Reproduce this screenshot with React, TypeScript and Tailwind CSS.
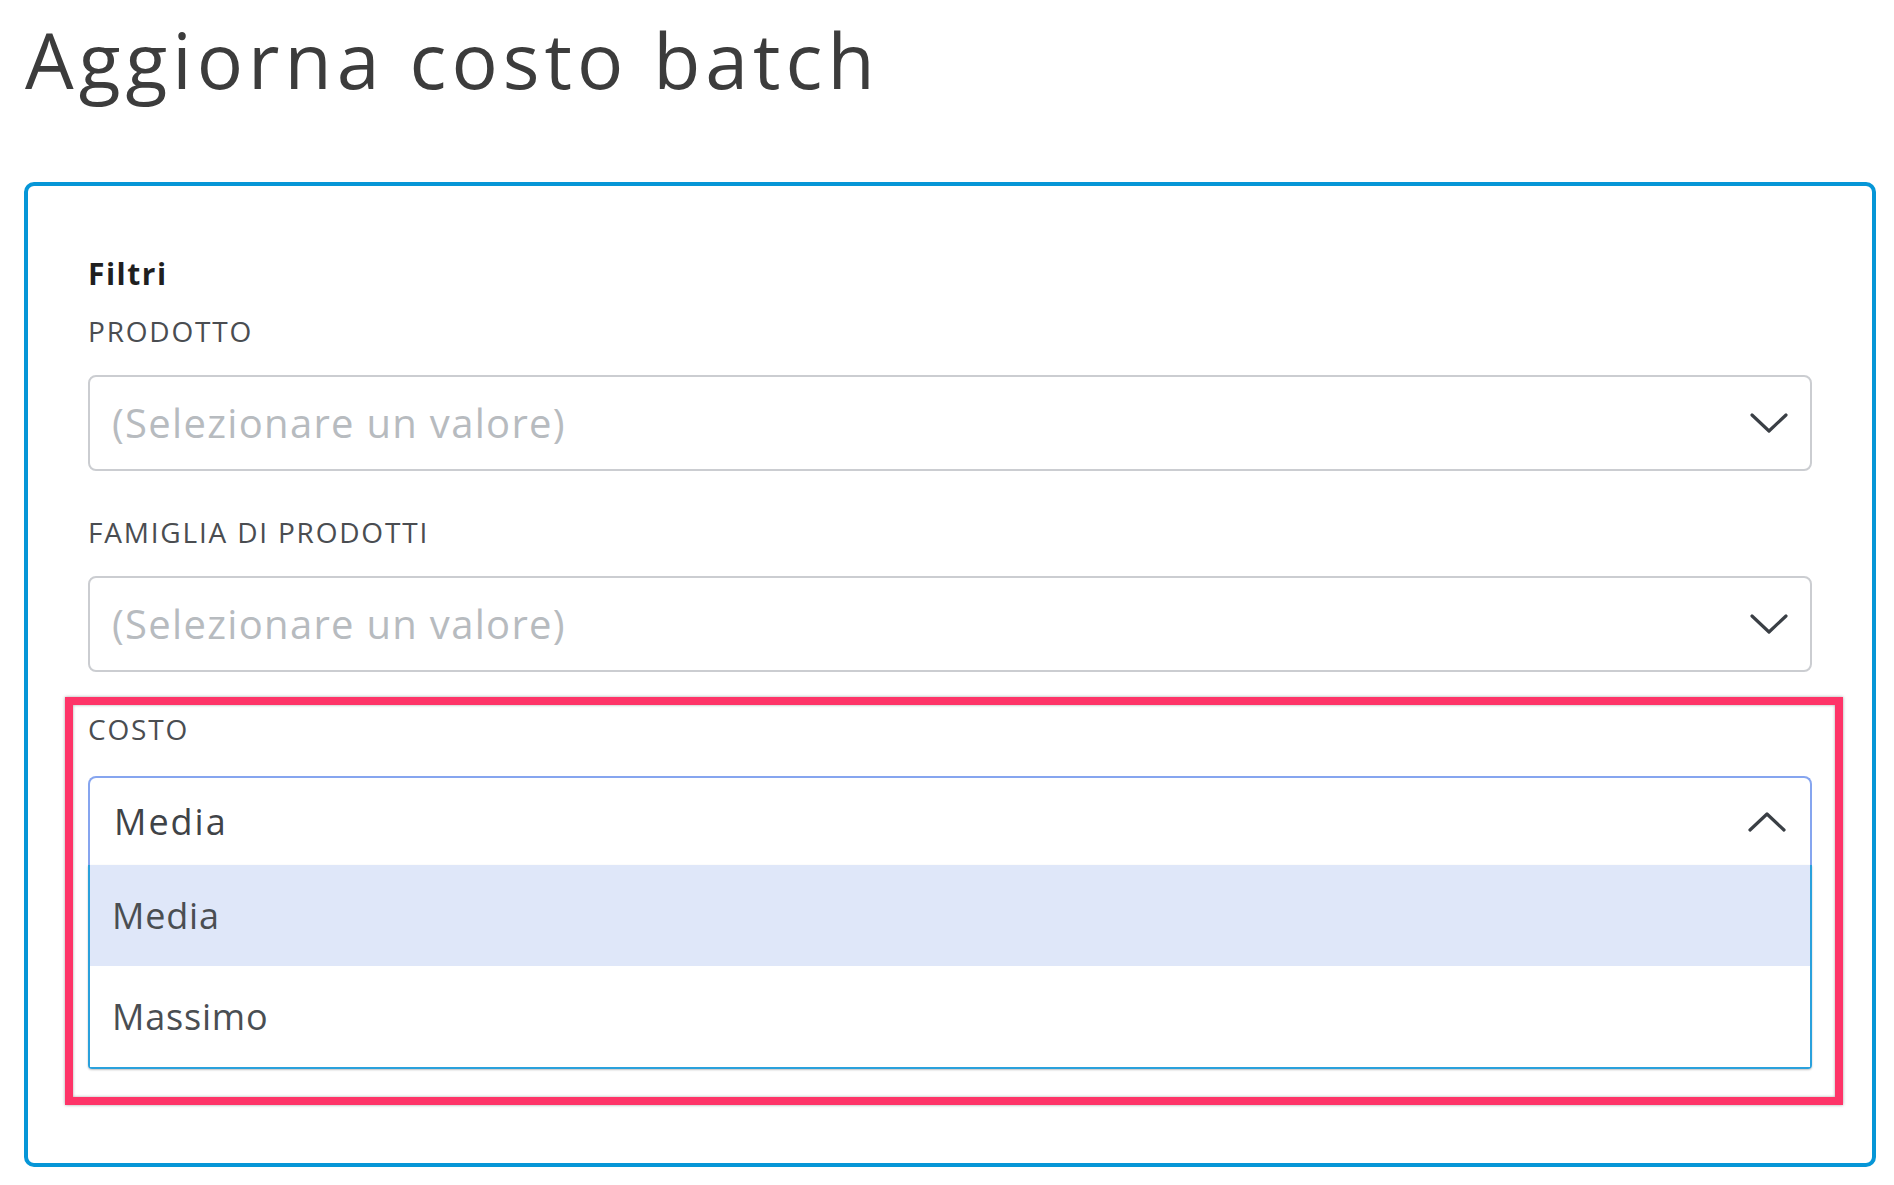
function Chevron({ up }: { up?: boolean }) {
  return (
    <svg width="38" height="22" viewBox="0 0 38 22" fill="none" className="shrink-0">
      <polyline
        points={up ? "2,19 19,3 36,19" : "2,3 19,19 36,3"}
        stroke="#3a3f45"
        strokeWidth="3.2"
        strokeLinecap="round"
        strokeLinejoin="round"
      />
    </svg>
  );
}

function FieldLabel({ children, className = "" }: { children: string; className?: string }) {
  return (
    <div className={`text-[28px] font-medium leading-[40px] tracking-[1.8px] text-[#4a4d51] ${className}`}>
      {children}
    </div>
  );
}

function EmptySelect() {
  return (
    <div className="mt-[24px] flex h-[96px] items-center justify-between rounded-lg border-2 border-[#cbcdd1] pl-[22px] pr-[22px]">
      <span className="text-[40px] tracking-[1.3px] text-[#b7bbbf]">(Selezionare un valore)</span>
      <Chevron />
    </div>
  );
}

export default function App() {
  const options = ["Media", "Massimo"];

  return (
    <div className="min-h-screen bg-white pl-[24px] pr-[18px] pt-[21px] font-['Open_Sans',sans-serif]">
      <h1 className="pl-[1px] text-[77px] font-normal leading-[77px] tracking-[5px] text-[#3c3c3c]">
        Aggiorna costo batch
      </h1>

      <div className="mt-[84px] rounded-[10px] border-4 border-[#0696d7] pb-[58px] pl-[60px] pr-[60px] pt-[68px]">
        <div className="text-[30px] font-bold leading-[40px] tracking-[1.5px] text-[#1f1f1f]">Filtri</div>

        <FieldLabel className="mt-[17px]">PRODOTTO</FieldLabel>
        <EmptySelect />

        <FieldLabel className="mt-[41px]">FAMIGLIA DI PRODOTTI</FieldLabel>
        <EmptySelect />

        {/* highlighted field */}
        <div className="-ml-[23px] -mr-[31px] mt-[25px] border-[8px] border-[#fe3468] pb-[28px] pl-[15px] pr-[23px] pt-[4px] shadow-[0_0_3px_rgba(0,0,0,0.35),inset_0_0_3px_rgba(0,0,0,0.35)]">
          <FieldLabel>COSTO</FieldLabel>
          <div className="mt-[27px]">
            <div className="flex h-[89px] items-center justify-between rounded-t-lg border-2 border-b-0 border-[#86a5ef] pl-[24px] pr-[24px]">
              <span className="text-[36px] tracking-[2px] text-[#3f4347]">Media</span>
              <Chevron up />
            </div>
            <ul className="rounded-b-[4px] border-2 border-t-0 border-[#2aa1dc] shadow-[0_1px_2px_rgba(0,0,0,0.25)]">
              {options.map((o, i) => (
                <li
                  key={o}
                  className={`flex h-[101px] items-center pl-[22px] text-[36px] tracking-[0.8px] text-[#4a4e52] ${
                    i === 0 ? "bg-[#dfe7f9]" : "bg-white"
                  }`}
                >
                  {o}
                </li>
              ))}
            </ul>
          </div>
        </div>
      </div>
    </div>
  );
}
